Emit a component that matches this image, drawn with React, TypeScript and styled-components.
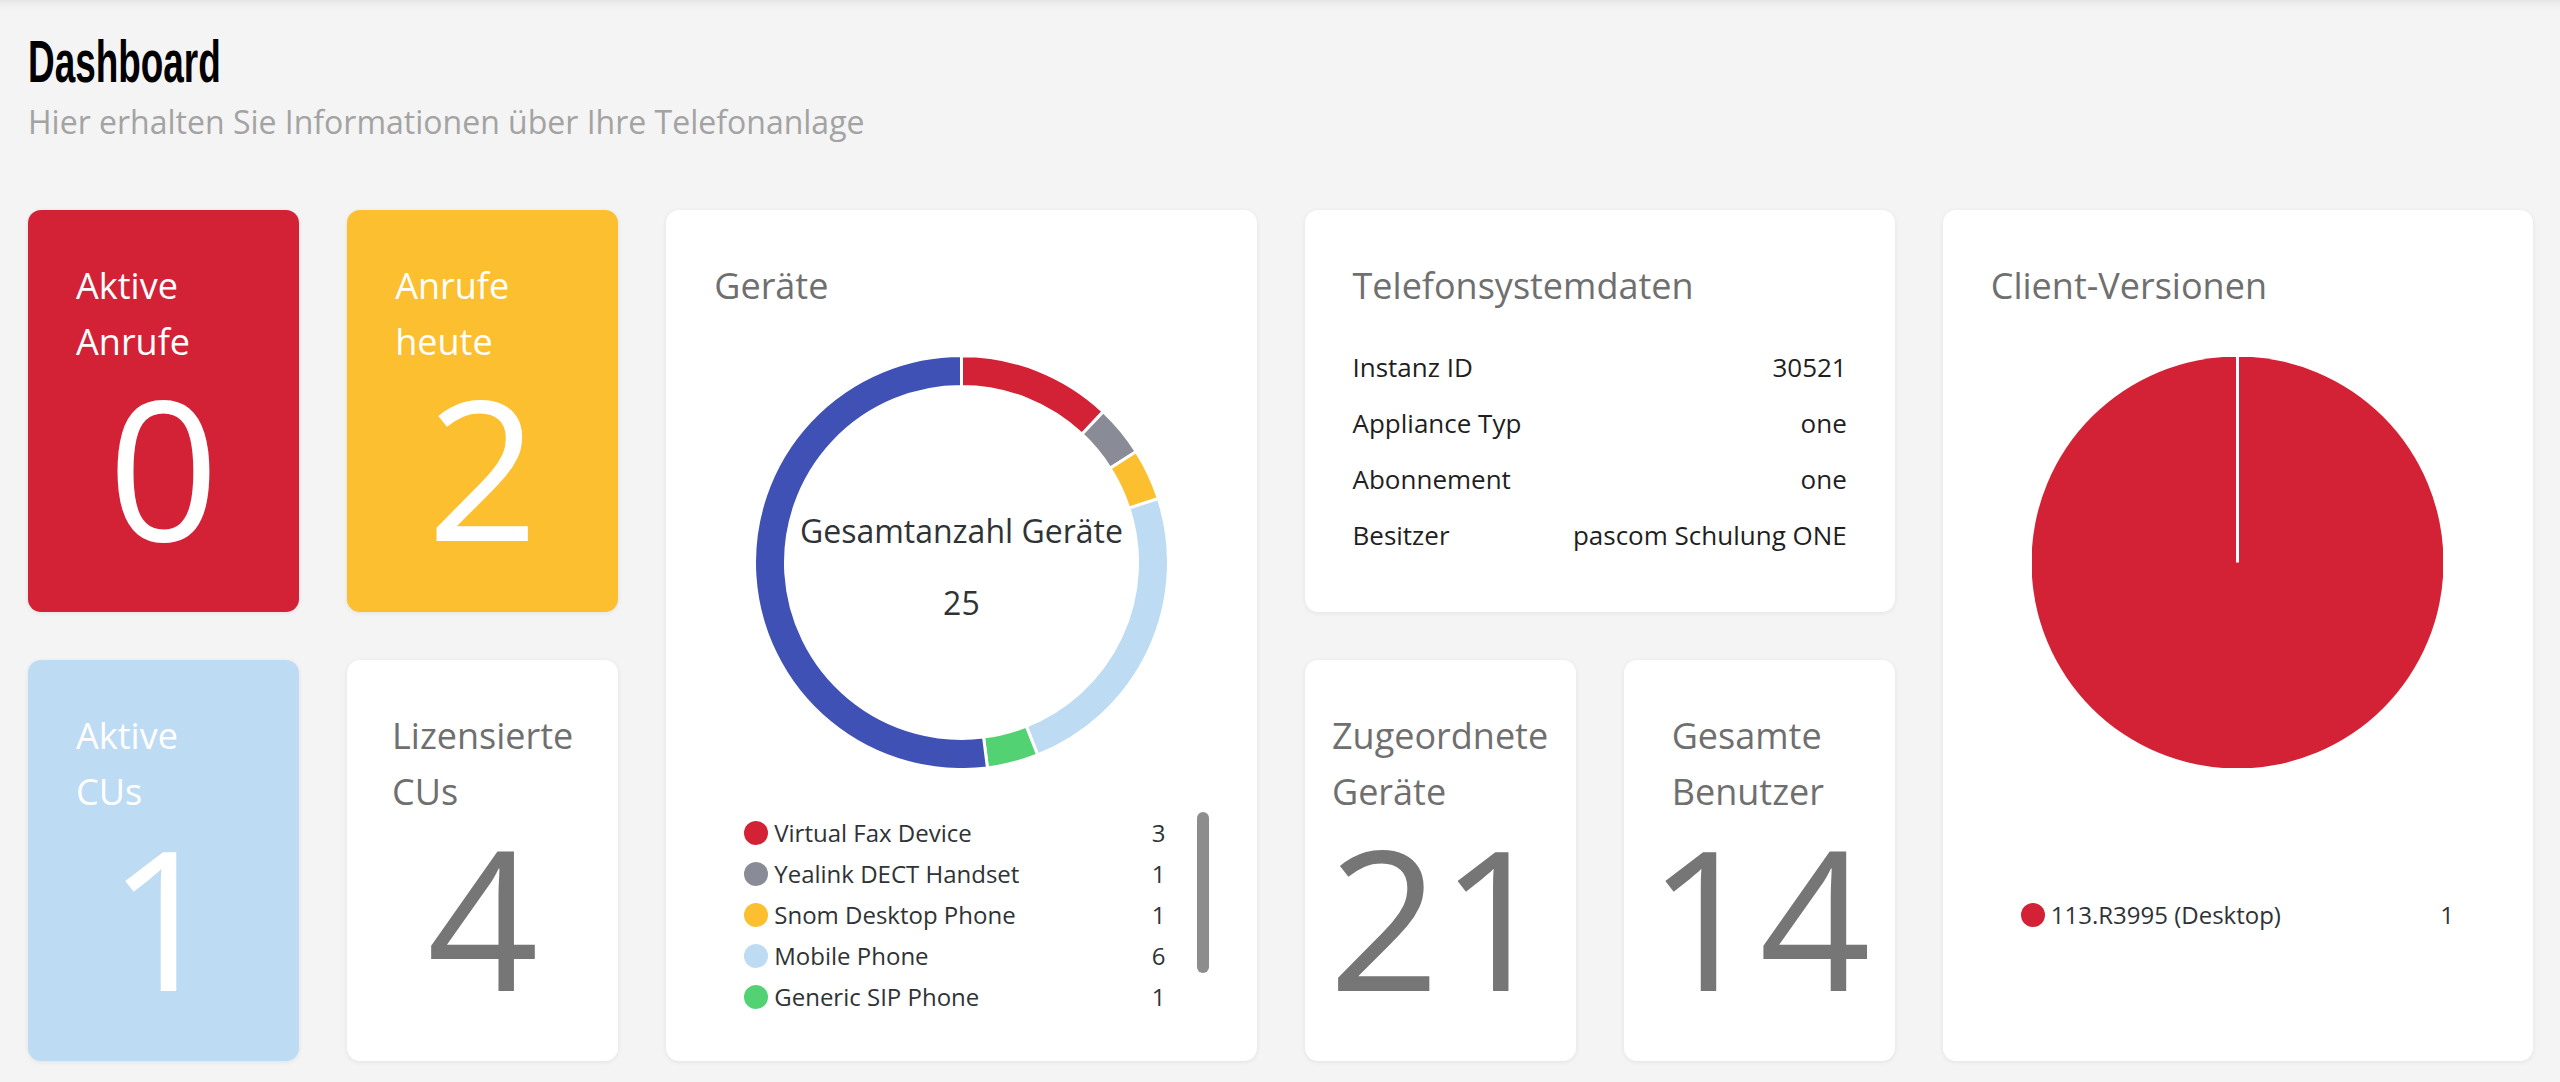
import styled, { createGlobalStyle, css } from 'styled-components';

const GlobalStyle = createGlobalStyle`
    html, body {
        margin: 0;
        padding: 0;
        background: #f4f4f4;
        font-family: 'Open Sans', 'Noto Sans', sans-serif;
    }

    #root {
        min-height: 100vh;
    }
`;

const Page = styled.div`
    min-height: 100vh;
    box-sizing: border-box;
    padding: 32px 27px 21px 28px;
    box-shadow: inset 0 10px 12px -10px rgba(0, 0, 0, 0.12);
`;

const Header = styled.header`
    padding-bottom: 68px;
`;

const Title = styled.h1`
    display: inline-block;
    margin: 0;
    font-family: 'Liberation Sans Narrow', 'Liberation Sans', sans-serif;
    font-weight: 700;
    font-size: 60px;
    line-height: 60px;
    color: #000;
    transform: scaleX(0.615);
    transform-origin: left center;
`;

const Subtitle = styled.p`
    margin: 10px 0 0;
    font-size: 32px;
    line-height: 40px;
    color: #a3a3a3;
`;

const Grid = styled.div`
    display: grid;
    grid-template-columns: repeat(8, 1fr);
    grid-template-rows: 402px 401px;
    gap: 48px;
`;

type Tone = 'red' | 'yellow' | 'sky' | 'white';

const tones: Record<Tone, { bg: string; fg: string; num: string }> = {
    red: { bg: '#d32136', fg: '#fff', num: '#fff' },
    yellow: { bg: '#fbbf30', fg: '#fff', num: '#fff' },
    sky: { bg: '#bddcf4', fg: '#fff', num: '#fff' },
    white: { bg: '#fff', fg: '#6f6f6f', num: '#767676' },
};

const Card = styled.section<{ col: string; row: string }>`
    grid-column: ${p => p.col};
    grid-row: ${p => p.row};
    background: #fff;
    border-radius: 13px;
    box-shadow: 0 1px 5px rgba(0, 0, 0, 0.08);
    box-sizing: border-box;
    min-width: 0;
`;

const StatCard = styled(Card)<{ tone: Tone }>`
    padding-top: 48px;
    background: ${p => tones[p.tone].bg};
    color: ${p => tones[p.tone].fg};
    overflow: hidden;
`;

const StatLabel = styled.div`
    width: min-content;
    min-width: 175px;
    margin: 0 auto;
    font-size: 36px;
    line-height: 56px;
`;

const StatValue = styled.div<{ tone: Tone }>`
    margin-top: -2px;
    text-align: center;
    font-size: 195px;
    line-height: 195px;
    color: ${p => tones[p.tone].num};
`;

const PanelCard = styled(Card)<{ flush?: boolean }>`
    display: flex;
    flex-direction: column;
    padding: 48px;
    color: #2f3336;

    ${p => p.flush && css`
        padding-bottom: 0;
    `}
`;

const PanelTitle = styled.h2`
    margin: 0;
    font-weight: 400;
    font-size: 36px;
    line-height: 56px;
    color: #6f6f6f;
`;

const ChartWrap = styled.div`
    position: relative;
    align-self: center;
    width: 411px;
    height: 411px;
    margin-top: 43px;

    svg {
        display: block;
    }
`;

const ChartCenter = styled.div`
    position: absolute;
    inset: 0;
    display: flex;
    flex-direction: column;
    align-items: center;
    justify-content: center;
    padding-top: 8px;
    font-size: 32px;
    line-height: 40px;
    color: #2f3336;
`;

const CenterValue = styled.div`
    margin-top: 32px;
`;

const LegendArea = styled.div`
    flex: 1;
    display: flex;
    align-items: center;
    padding-left: 30px;
`;

const LegendList = styled.div<{ scroll?: boolean }>`
    position: relative;
    flex: 1;
    min-width: 0;

    ${p => p.scroll && css`
        padding-right: 12px;
    `}
`;

const Scroller = styled.div`
    height: 205px;
    overflow-y: auto;
    scrollbar-width: none;

    &::-webkit-scrollbar {
        display: none;
    }
`;

const ScrollThumb = styled.div`
    position: absolute;
    top: 0;
    right: 0;
    width: 12px;
    height: 161px;
    border-radius: 6px;
    background: #8d8d8d;
`;

const LegendRow = styled.div`
    display: flex;
    align-items: center;
    height: 41px;
    padding-right: 31px;
    font-size: 24px;
    color: #2f3336;
`;

const Dot = styled.span<{ color: string }>`
    flex: none;
    width: 24px;
    height: 24px;
    margin-right: 6px;
    border-radius: 50%;
    background: ${p => p.color};
`;

const LegendLabel = styled.span`
    flex: 1;
    white-space: nowrap;
`;

const LegendCount = styled.span`
    text-align: right;
`;

const InfoList = styled.dl`
    margin: 25px 0 0;
`;

const InfoRow = styled.div`
    display: flex;
    justify-content: space-between;
    font-size: 26px;
    line-height: 56px;
    color: #1f1f1f;

    dt, dd {
        margin: 0;
    }
`;

type Slice = { label: string; count: number; color: string };

const devices: Slice[] = [
    { label: 'Virtual Fax Device', count: 3, color: '#d32136' },
    { label: 'Yealink DECT Handset', count: 1, color: '#898c96' },
    { label: 'Snom Desktop Phone', count: 1, color: '#fbbf30' },
    { label: 'Mobile Phone', count: 6, color: '#bddcf4' },
    { label: 'Generic SIP Phone', count: 1, color: '#53d274' },
    { label: 'pascom Desktop Client', count: 13, color: '#4051b5' },
];

const clients: Slice[] = [
    { label: '113.R3995 (Desktop)', count: 1, color: '#d32136' },
];

const systemData = [
    ['Instanz ID', '30521'],
    ['Appliance Typ', 'one'],
    ['Abonnement', 'one'],
    ['Besitzer', 'pascom Schulung ONE'],
];

function point(r: number, a: number) {
    const c = 205.5;
    return `${(c + r * Math.sin(a)).toFixed(2)} ${(c - r * Math.cos(a)).toFixed(2)}`;
}

function Donut({ data }: { data: Slice[] }) {
    const total = data.reduce((s, d) => s + d.count, 0);
    const outer = 207;
    const inner = 176;
    let start = 0;

    return (
        <svg width="411" height="411" viewBox="0 0 411 411">
            {data.map(d => {
                const a0 = start;
                const a1 = start + (d.count / total) * Math.PI * 2;
                start = a1;
                const large = a1 - a0 > Math.PI ? 1 : 0;
                const path = `M ${point(outer, a0)} A ${outer} ${outer} 0 ${large} 1 ${point(outer, a1)} L ${point(inner, a1)} A ${inner} ${inner} 0 ${large} 0 ${point(inner, a0)} Z`;
                return <path key={d.label} d={path} fill={d.color} stroke="#fff" strokeWidth="3" />;
            })}
        </svg>
    );
}

function Pie({ color }: { color: string }) {
    return (
        <svg width="411" height="411" viewBox="0 0 411 411">
            <circle cx="205.5" cy="205.5" r="206" fill={color} />
            <line x1="205.5" y1="0" x2="205.5" y2="205.5" stroke="#fff" strokeWidth="3" />
        </svg>
    );
}

function Legend({ data, scroll }: { data: Slice[]; scroll?: boolean }) {
    const rows = data.map(d => (
        <LegendRow key={d.label}>
            <Dot color={d.color} />
            <LegendLabel>{d.label}</LegendLabel>
            <LegendCount>{d.count}</LegendCount>
        </LegendRow>
    ));

    return (
        <LegendArea>
            <LegendList scroll={scroll}>
                {scroll ? <Scroller>{rows}</Scroller> : rows}
                {scroll && <ScrollThumb />}
            </LegendList>
        </LegendArea>
    );
}

function Stat({ tone, label, value, col, row }: { tone: Tone; label: string; value: number; col: string; row: string }) {
    return (
        <StatCard tone={tone} col={col} row={row}>
            <StatLabel>{label}</StatLabel>
            <StatValue tone={tone}>{value}</StatValue>
        </StatCard>
    );
}

export default function App() {
    const total = devices.reduce((s, d) => s + d.count, 0);

    return (
        <Page>
            <GlobalStyle />
            <Header>
                <Title>Dashboard</Title>
                <Subtitle>Hier erhalten Sie Informationen über Ihre Telefonanlage</Subtitle>
            </Header>

            <Grid>
                <Stat tone="red" label="Aktive Anrufe" value={0} col="1" row="1" />
                <Stat tone="yellow" label="Anrufe heute" value={2} col="2" row="1" />
                <Stat tone="sky" label="Aktive CUs" value={1} col="1" row="2" />
                <Stat tone="white" label="Lizensierte CUs" value={4} col="2" row="2" />

                <PanelCard col="3 / 5" row="1 / 3" flush>
                    <PanelTitle>Geräte</PanelTitle>
                    <ChartWrap>
                        <Donut data={devices} />
                        <ChartCenter>
                            <div>Gesamtanzahl Geräte</div>
                            <CenterValue>{total}</CenterValue>
                        </ChartCenter>
                    </ChartWrap>
                    <Legend data={devices} scroll />
                </PanelCard>

                <PanelCard col="5 / 7" row="1">
                    <PanelTitle>Telefonsystemdaten</PanelTitle>
                    <InfoList>
                        {systemData.map(([k, v]) => (
                            <InfoRow key={k}>
                                <dt>{k}</dt>
                                <dd>{v}</dd>
                            </InfoRow>
                        ))}
                    </InfoList>
                </PanelCard>

                <Stat tone="white" label="Zugeordnete Geräte" value={21} col="5" row="2" />
                <Stat tone="white" label="Gesamte Benutzer" value={14} col="6" row="2" />

                <PanelCard col="7 / 9" row="1 / 3" flush>
                    <PanelTitle>Client-Versionen</PanelTitle>
                    <ChartWrap>
                        <Pie color="#d32136" />
                    </ChartWrap>
                    <Legend data={clients} />
                </PanelCard>
            </Grid>
        </Page>
    );
}
